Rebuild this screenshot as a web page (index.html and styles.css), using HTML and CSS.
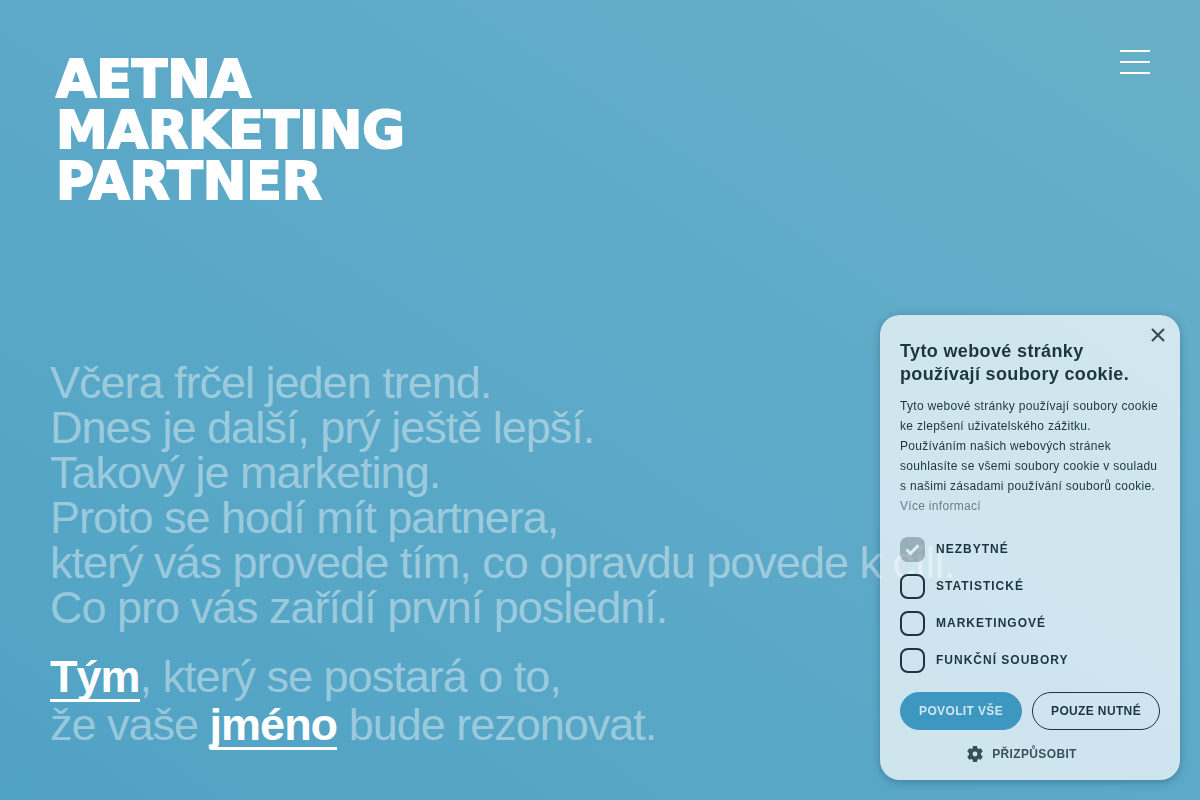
FILE: index.html
```html
<!DOCTYPE html>
<html lang="cs">
<head>
  <meta charset="UTF-8" />
  <meta name="viewport" content="width=device-width, initial-scale=1.0" />
  <title>Aetna Marketing Partner</title>
  <link rel="stylesheet" href="styles.css">
</head>
<body>
  <div class="page">
    <header class="header">
      <h1 class="logo">AETNA<br>MARKETING<br>PARTNER</h1>
      <button class="menu-btn" type="button" aria-label="Menu">
        <span></span>
        <span></span>
        <span></span>
      </button>
    </header>

    <main class="intro">
      <p>
        Včera frčel jeden trend.<br>
        Dnes je další, prý ještě lepší.<br>
        Takový je marketing.<br>
        Proto se hodí mít partnera,<br>
        který vás provede tím, co opravdu povede k cíli.<br>
        Co pro vás zařídí první poslední.
      </p>
      <p>
        <a href="#tym">Tým</a>, který se postará o to,<br>
        že vaše <a href="#jmeno">jméno</a> bude rezonovat.
      </p>
    </main>
  </div>

  <section class="cookies" role="dialog" aria-labelledby="cookies-title">
    <button class="cookies-close" type="button" aria-label="Zavřít">
      <svg width="14" height="14" viewBox="0 0 14 14"><path d="M1 1L13 13M13 1L1 13" fill="none" stroke="currentColor" stroke-width="2.200"/></svg>
    </button>
    <h2 id="cookies-title">Tyto webové stránky používají soubory cookie.</h2>
    <p class="cookies-text">Tyto webové stránky používají soubory cookie ke zlepšení uživatelského zážitku. Používáním našich webových stránek souhlasíte se všemi soubory cookie v souladu s&nbsp;našimi zásadami používání souborů cookie. <a href="#vice">Více informací</a></p>

    <div class="options">
      <div class="option">
        <input type="checkbox" id="necessary" checked disabled>
        <label for="necessary">Nezbytné</label>
      </div>
      <div class="option">
        <input type="checkbox" id="statistics">
        <label for="statistics">Statistické</label>
      </div>
      <div class="option">
        <input type="checkbox" id="marketing">
        <label for="marketing">Marketingové</label>
      </div>
      <div class="option">
        <input type="checkbox" id="functional">
        <label for="functional">Funkční soubory</label>
      </div>
    </div>

    <div class="buttons">
      <button class="btn btn-primary" type="button">Povolit vše</button>
      <button class="btn" type="button">Pouze nutné</button>
    </div>
    <button class="customize" type="button">
      <svg width="16" height="16" viewBox="0 0 16 16"><path fill="currentColor" fill-rule="evenodd" d="M6 0h4l.4 2.3 1.2.7 2.2-.8 2 3.4-1.8 1.5v1.8l1.8 1.5-2 3.4-2.2-.8-1.2.7L10 16H6l-.4-2.3-1.2-.7-2.2.8-2-3.4L2 8.900V7.100L.2 5.600l2-3.400 2.200.8 1.200-.7zM8 5.600a2.400 2.400 0 1 0 0 4.800 2.400 2.400 0 0 0 0-4.800z"/></svg>
      Přizpůsobit
    </button>
  </section>
</body>
</html>
```
FILE: styles.css
```css
* {
  box-sizing: border-box;
}
body {
  margin: 0;
  font-family: "Liberation Sans", Arial, sans-serif;
  background: linear-gradient(34deg, #50a2c4 0%, #58a7c7 32%, #5ea9c8 55%, #63adc9 78%, #68b0c8 100%);
  color: #fff;
}
button {
  font-family: inherit;
  cursor: pointer;
}
.page {
  min-height: 100vh;
  padding: 50px;
  display: flex;
  flex-direction: column;
  justify-content: space-between;
}
.header {
  display: flex;
  justify-content: space-between;
  align-items: flex-start;
}
.logo {
  margin: 4px 0 0 6px;
  font-family: "DejaVu Sans", Verdana, sans-serif;
  font-size: 52px;
  font-weight: 700;
  line-height: 51px;
  -webkit-text-stroke: 2px #fff;
}
.menu-btn {
  display: flex;
  flex-direction: column;
  gap: 9px;
  width: 30px;
  padding: 0;
  border: none;
  background: none;
}
.menu-btn span {
  width: 100%;
  height: 2px;
  background: #fff;
}

.intro {
  font-size: 45px;
  line-height: 45px;
  letter-spacing: -1px;
  color: rgba(255, 255, 255, 0.42);
}
.intro p {
  margin: 0;
}
.intro p + p {
  margin-top: 24px;
}
.intro a {
  display: inline-block;
  border-bottom: 3px solid #fff;
  color: #fff;
  font-weight: 700;
  text-decoration: none;
}

.cookies {
  position: fixed;
  right: 20px;
  bottom: 20px;
  width: 300px;
  padding: 25px 20px 18px;
  border-radius: 20px;
  background: rgba(255, 255, 255, 0.7);
  box-shadow: 0 2px 8px rgba(0, 40, 60, 0.3);
  color: #1d353f;
}
.cookies-close {
  position: absolute;
  top: 13px;
  right: 15px;
  display: flex;
  padding: 0;
  border: none;
  background: none;
  color: #1d353f;
  opacity: 0.85;
}
.cookies h2 {
  margin: 0 0 10px;
  font-size: 18px;
  line-height: 23px;
  letter-spacing: 0.02em;
}
.cookies-text {
  margin: 0 0 21px;
  font-size: 12px;
  line-height: 20px;
  letter-spacing: 0.025em;
}
.cookies-text a {
  color: inherit;
  text-decoration: none;
  opacity: 0.6;
}

.options {
  display: grid;
  gap: 12px;
  margin-bottom: 19px;
}
.option {
  display: flex;
  align-items: flex-start;
  gap: 11px;
  font-size: 12px;
  font-weight: 700;
  line-height: 25px;
  letter-spacing: 1px;
  text-transform: uppercase;
}
.option input {
  appearance: none;
  display: grid;
  place-items: center;
  width: 25px;
  height: 25px;
  margin: 0;
  border: 2px solid #1d353f;
  border-radius: 8px;
}
.option input:checked {
  border-color: transparent;
  background: #1d353f border-box;
  opacity: 0.3;
}
.option input:checked::before {
  content: "";
  width: 10px;
  height: 4px;
  margin-bottom: 2px;
  border: solid #fff;
  border-width: 0 0 3px 3px;
  transform: rotate(-45deg);
}

.buttons {
  display: flex;
  gap: 10px;
}
.btn {
  flex: 1 1 auto;
  height: 38px;
  padding: 0 16px;
  border: 1px solid #1d353f;
  border-radius: 20px;
  background: none;
  color: #1d353f;
  font-size: 12px;
  font-weight: 700;
  letter-spacing: 0.03em;
  text-transform: uppercase;
  white-space: nowrap;
}
.btn-primary {
  border-color: #3e97c1;
  background: #3e97c1;
  color: #cfe6ee;
}
.customize {
  display: flex;
  align-items: center;
  gap: 9px;
  margin: 16px auto 0;
  padding: 0 16px 0 0;
  border: none;
  background: none;
  color: #1d353f;
  font-size: 12px;
  font-weight: 700;
  letter-spacing: 0.03em;
  text-transform: uppercase;
  opacity: 0.85;
}
```
